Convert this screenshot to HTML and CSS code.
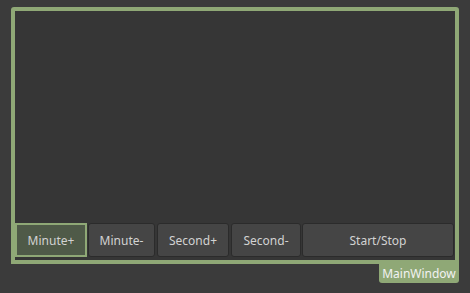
FILE: index.html
```html
<!DOCTYPE html>
<html>
<head>
<meta charset="utf-8">
<link rel="stylesheet" href="styles.css">
</head>
<body>
<div class="desk">
  <div class="frame">
    <div class="canvas"></div>
    <div class="buttons">
      <button class="btn focus w1">Minute+</button>
      <button class="btn w2">Minute-</button>
      <button class="btn w3">Second+</button>
      <button class="btn w4">Second-</button>
      <button class="btn w5">Start/Stop</button>
    </div>
  </div>
  <div class="tagrow"><div class="tag">MainWindow</div></div>
</div>
</body>
</html>
```
FILE: styles.css
```css
html, body {
  margin: 0;
  padding: 0;
  background: #3b3b3b;
  width: 470px;
  height: 293px;
  overflow: hidden;
  font-family: "Noto Sans", "Open Sans", sans-serif;
}
.desk {
  padding: 7px 11px 0 11px;
  width: 448px;
}
.frame {
  width: 440px;
  height: 249px;
  border: 4px solid #8fa876;
  border-radius: 3px 3px 0 0;
  background: #363636;
  display: flex;
  flex-direction: column;
}
.canvas {
  flex: 1;
}
.buttons {
  display: flex;
  height: 34px;
  margin-bottom: 3px;
}
.btn {
  box-sizing: border-box;
  height: 34px;
  margin: 0;
  padding: 0;
  background: #454545;
  border: 1px solid #2b2b2b;
  border-radius: 3px;
  color: #d2d2d2;
  font-family: "Noto Sans", "Open Sans", sans-serif;
  font-size: 12px;
  text-align: center;
}
.btn.focus {
  background: #4f5a48;
  border: 2px solid #8fa876;
  border-radius: 0;
}
.w1 { width: 72px; margin-right: 1px; }
.w2 { width: 67px; margin-right: 2px; }
.w3 { width: 72px; margin-right: 2px; }
.w4 { width: 70px; margin-right: 1px; }
.w5 { width: 152px; }
.tagrow {
  display: flex;
  justify-content: flex-end;
}
.tag {
  width: 80px;
  height: 19px;
  background: #8fa876;
  color: #f2f2f2;
  font-size: 12px;
  line-height: 19px;
  text-align: center;
  border-radius: 0 0 3px 3px;
}
```
